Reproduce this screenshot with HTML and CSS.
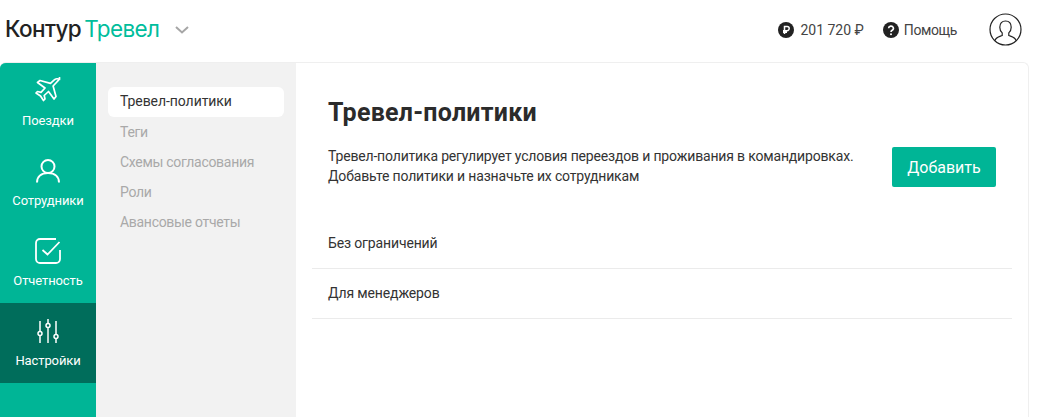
FILE: index.html
```html
<!DOCTYPE html>
<html lang="ru">
<head>
    <meta charset="UTF-8">
    <title>Контур Тревел</title>
    <link rel="stylesheet" href="styles.css">
</head>
<body>
    <header class="topbar">
        <div class="logo">
            <span class="logo-dark">Контур</span><span class="logo-green">Тревел</span>
            <svg class="logo-arrow" width="14" height="8" viewBox="0 0 14 8"><path d="M1 1l6 5.5L13 1" fill="none" stroke="#a6a6a6" stroke-width="2"/></svg>
        </div>
        <div class="top-actions">
            <div class="top-item balance">
                <svg width="16" height="16" viewBox="0 0 16 16"><circle cx="8" cy="8" r="8" fill="#222"/><path d="M6.5 12V4.5h2.6a2 2 0 0 1 0 4.2H5M5 10.300h4" fill="none" stroke="#fff" stroke-width="1.500"/></svg>
                <span>201 720 ₽</span>
            </div>
            <div class="top-item help">
                <svg width="16" height="16" viewBox="0 0 16 16"><circle cx="8" cy="8" r="8" fill="#222"/><path d="M5.600 6.300a2.400 2.200 0 1 1 3.600 1.900c-.8.5-1.200.9-1.200 1.800" fill="none" stroke="#fff" stroke-width="1.600"/><circle cx="8" cy="12.200" r="1" fill="#fff"/></svg>
                <span>Помощь</span>
            </div>
            <svg class="avatar" width="33" height="33" viewBox="0 0 33 33"><circle cx="16.500" cy="16.500" r="15.500" fill="none" stroke="#222" stroke-width="1.200"/><path d="M6 27.500c1-3.200 4.500-3.800 7.200-5v-2.600c-1.600-1.300-2.400-3.200-2.400-5.600 0-4 2.200-6.300 5.700-6.300s5.700 2.300 5.700 6.300c0 2.400-.8 4.300-2.400 5.600v2.600c2.700 1.200 6.200 1.800 7.200 5" fill="none" stroke="#222" stroke-width="1.200"/></svg>
        </div>
    </header>
    <div class="layout">
        <nav class="sidebar">
            <a class="side-item" href="#">
                <svg width="28" height="28" viewBox="0 0 28 28"><path d="M25.500 2.500c-1.500-1.300-4-.8-5.500.6l-3.500 3.300L6 3.500 3.500 5.500l7.500 5.500-4 4.300-3.500-.8-1.500 1.500 4.500 3 3 4.500 1.500-1.500-.8-3.500 4.300-4 5.500 7.500 2-2.500-2.900-10.500 3.300-3.500c1.400-1.500 3.400-3.700 3.100-5z" fill="none" stroke="#fff" stroke-width="1.700" stroke-linejoin="round"/></svg>
                <span>Поездки</span>
            </a>
            <a class="side-item" href="#">
                <svg width="28" height="28" viewBox="0 0 28 28"><circle cx="14" cy="9.500" r="6.500" fill="none" stroke="#fff" stroke-width="2"/><path d="M3 25.500c0-6 4.500-9.500 11-9.500s11 3.500 11 9.500" fill="none" stroke="#fff" stroke-width="2"/></svg>
                <span>Сотрудники</span>
            </a>
            <a class="side-item" href="#">
                <svg width="28" height="28" viewBox="0 0 28 28"><path d="M22 2H6a4 4 0 0 0-4 4v16a4 4 0 0 0 4 4h16a4 4 0 0 0 4-4v-9" fill="none" stroke="#fff" stroke-width="1.800"/><path d="M8.500 13l5 4.500L25.500 5" fill="none" stroke="#fff" stroke-width="1.800"/></svg>
                <span>Отчетность</span>
            </a>
            <a class="side-item active" href="#">
                <svg width="28" height="28" viewBox="0 0 28 28"><g fill="none" stroke="#fff" stroke-width="1.500"><path d="M6 4v10M6 19v7M14 2v4M22 4v13M22 22v4"/><circle cx="6" cy="16.500" r="2"/><circle cx="14" cy="8.500" r="2"/><circle cx="22" cy="19.500" r="2"/></g><path d="M14 11v15" stroke="#b9d6cf" stroke-width="2"/></svg>
                <span>Настройки</span>
            </a>
        </nav>
        <aside class="submenu">
            <a class="sub-item current" href="#">Тревел-политики</a>
            <a class="sub-item" href="#">Теги</a>
            <a class="sub-item" href="#">Схемы согласования</a>
            <a class="sub-item" href="#">Роли</a>
            <a class="sub-item" href="#">Авансовые отчеты</a>
        </aside>
        <main class="content">
            <h1>Тревел-политики</h1>
            <div class="intro">
                <p>Тревел-политика регулирует условия переездов и проживания в командировках.<br>Добавьте политики и назначьте их сотрудникам</p>
                <button class="add-btn">Добавить</button>
            </div>
            <ul class="policy-list">
                <li>Без ограничений</li>
                <li>Для менеджеров</li>
            </ul>
        </main>
    </div>
</body>
</html>
```

FILE: styles.css
```css
html, body {
    height: 100%;
}

body {
    margin: 0;
    font-family: Roboto, "Noto Sans", sans-serif;
    font-size: 14px;
    color: #333;
    background-color: #fff;
    overflow: hidden;
    display: flex;
    flex-direction: column;
}

a {
    text-decoration: none;
}

.topbar {
    height: 62px;
    flex: none;
    display: flex;
    justify-content: space-between;
    align-items: center;
    padding: 0 23px 3px 5px;
    box-sizing: border-box;
}

.logo {
    display: flex;
    align-items: center;
    font-family: Inter, sans-serif;
    font-size: 22.500px;
    letter-spacing: -0.6px;
    margin-top: -2px;
}

.logo-dark {
    color: #222;
    font-weight: 500;
    margin-right: 3px;
}

.logo-green {
    color: #00bd9c;
}

.logo-arrow {
    margin-left: 16px;
    margin-top: 2px;
}

.top-actions {
    display: flex;
    align-items: center;
}

.top-item {
    display: flex;
    align-items: center;
    gap: 6px;
    font-size: 14px;
    color: #444;
}

.balance {
    margin-right: 19px;
}

.help {
    gap: 5px;
    margin-right: 32px;
    letter-spacing: -0.4px;
}

.layout {
    flex: 1;
    display: flex;
    margin-right: 16px;
    border-top: 1px solid #efefef;
    border-right: 1px solid #efefef;
    border-radius: 6px 6px 0 0;
    overflow: hidden;
}

.sidebar {
    width: 96px;
    flex: none;
    background-color: #00b596;
}

.side-item {
    height: 80px;
    display: flex;
    flex-direction: column;
    align-items: center;
    padding-top: 14px;
    box-sizing: border-box;
    color: #fff;
    font-size: 13px;
    letter-spacing: -0.1px;
}

.side-item svg {
    margin-bottom: 8px;
}

.side-item.active {
    background-color: #006d5b;
}

.submenu {
    width: 200px;
    flex: none;
    box-sizing: border-box;
    padding: 24px 12px;
    background-color: #f2f2f2;
    display: flex;
    flex-direction: column;
}

.sub-item {
    height: 30px;
    line-height: 30px;
    padding-left: 12px;
    border-radius: 6px;
    font-size: 14px;
    letter-spacing: -0.3px;
    color: #a9a9a9;
}

.sub-item.current {
    line-height: 29px;
    letter-spacing: -0.07px;
    background-color: #fff;
    color: #333;
}

.content {
    flex: 1;
    padding: 0 16px;
}

.content h1 {
    margin: 35px 16px 0;
    font-size: 25px;
    line-height: 30px;
    font-weight: 700;
    letter-spacing: 0.25px;
    color: #2b2b2b;
}

.intro {
    display: flex;
    justify-content: space-between;
    align-items: flex-start;
    margin: 18px 16px 0;
}

.intro p {
    margin: 0;
    font-size: 14px;
    line-height: 20px;
    letter-spacing: -0.17px;
}

.add-btn {
    width: 104px;
    height: 40px;
    margin-top: 1px;
    border: none;
    border-radius: 2px;
    background-color: #00b596;
    color: #fff;
    font-family: inherit;
    font-size: 16px;
}

.policy-list {
    list-style: none;
    margin: 32px 0 0;
    padding: 0;
}

.policy-list li {
    height: 50px;
    line-height: 48px;
    padding-left: 16px;
    letter-spacing: -0.14px;
    border-bottom: 1px solid #ebebeb;
    box-sizing: border-box;
}
```
